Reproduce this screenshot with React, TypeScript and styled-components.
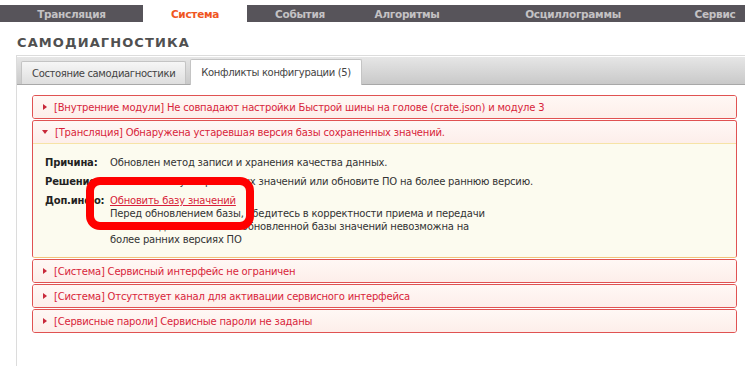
import React from "react";
import styled, { createGlobalStyle } from "styled-components";

const GlobalStyle = createGlobalStyle`
  html, body { margin: 0; padding: 0; background: #ffffff; }
  body { font-family: "DejaVu Sans", Verdana, sans-serif; font-size: 10px; color: #333; letter-spacing: -0.2px; }
`;

const Page = styled.div`
  width: 745px;
  height: 366px;
  overflow: hidden;
  padding-top: 5px;
  box-sizing: border-box;
`;

const NavBar = styled.div`
  display: flex;
  height: 17px;
  background: #57545a;
`;

const NavTab = styled.div<{ $w: number; $active?: boolean }>`
  flex: 0 0 ${(p) => p.$w}px;
  height: ${(p) => (p.$active ? 18 : 17)}px;
  display: flex;
  align-items: center;
  justify-content: center;
  font-size: 10.5px;
  font-weight: bold;
  letter-spacing: -0.3px;
  color: ${(p) => (p.$active ? "#f0561e" : "#c4c2c4")};
  background: ${(p) => (p.$active ? "#ffffff" : "transparent")};
`;

const Title = styled.h1`
  margin: 13px 0 0 17px;
  font-size: 13px;
  line-height: 16px;
  font-weight: bold;
  letter-spacing: 1.1px;
  color: #505050;
`;

const Content = styled.div`
  margin: 4px 0 0 16px;
  border-left: 1px solid #dcdcdc;
  border-top: 1px solid #dcdcdc;
  height: 320px;
`;

const TabStrip = styled.div`
  display: flex;
  align-items: flex-end;
  gap: 4px;
  height: 27px;
  margin-top: 1px;
  padding-left: 4px;
  background: linear-gradient(#e6e6e6, #c9c9c9);
  border-bottom: 1px solid #a8a8a8;
`;

const Tab = styled.div<{ $active?: boolean }>`
  height: ${(p) => (p.$active ? 26 : 23)}px;
  margin-bottom: ${(p) => (p.$active ? -1 : 0)}px;
  padding: 0 10px;
  display: flex;
  align-items: center;
  box-sizing: border-box;
  border: 1px solid #c4c4c4;
  border-bottom: none;
  border-radius: 2px 2px 0 0;
  font-size: 10px;
  letter-spacing: -0.35px;
  color: #444;
  background: ${(p) => (p.$active ? "#ffffff" : "linear-gradient(#f6f6f6, #dedede)")};
`;

const PanelList = styled.div`
  display: flex;
  flex-direction: column;
  gap: 1px;
  margin: 10px 0 0 15px;
  width: 705px;
`;

const Panel = styled.div<{ $open?: boolean }>`
  border: 1px solid #e05252;
  border-bottom-color: ${(p) => (p.$open ? "#f1c27a" : "#e05252")};
  border-radius: 3px;
  overflow: hidden;
`;

const PanelHeader = styled.div<{ $open?: boolean }>`
  height: 22px;
  display: flex;
  align-items: center;
  gap: 6px;
  padding-left: 9px;
  background: linear-gradient(#fff8f5, #fdeeea);
  border-bottom: ${(p) => (p.$open ? "1px solid #f6e3a6" : "none")};
  color: #d81f3a;
  font-size: 10px;
  white-space: nowrap;
`;

const Arrow = styled.span<{ $open?: boolean }>`
  width: 0;
  height: 0;
  ${(p) =>
    p.$open
      ? `border-left: 3px solid transparent; border-right: 3px solid transparent; border-top: 4px solid #c8283a; margin-right: 1px;`
      : `border-top: 3px solid transparent; border-bottom: 3px solid transparent; border-left: 4px solid #c8283a; margin-left: 1px; margin-right: 1px;`}
`;

const PanelBody = styled.div`
  position: relative;
  background: #fcfbef;
  padding: 12px 12px 11px;
  display: flex;
  flex-direction: column;
  gap: 6px;
`;

const Row = styled.div`
  display: grid;
  grid-template-columns: 65px 1fr;
  line-height: 13px;
  font-size: 10px;
  color: #333;
`;

const Label = styled.span`
  font-weight: bold;
  color: #222;
`;

const Link = styled.a`
  color: #d81f3a;
  text-decoration: underline;
  cursor: pointer;
`;

const DescLine = styled.div`
  white-space: nowrap;
`;

const Highlight = styled.div`
  position: absolute;
  left: 53px;
  top: 33px;
  width: 168px;
  height: 53px;
  box-sizing: border-box;
  border: 8px solid #ff0000;
  border-radius: 14px;
  pointer-events: none;
`;

const navTabs: { label: string; w: number; active?: boolean }[] = [
  { label: "Трансляция", w: 143 },
  { label: "Система", w: 104, active: true },
  { label: "События", w: 106 },
  { label: "Алгоритмы", w: 108 },
  { label: "Осциллограммы", w: 224 },
  { label: "Сервис", w: 60 },
];

const collapsedAfter = [
  "[Система] Сервисный интерфейс не ограничен",
  "[Система] Отсутствует канал для активации сервисного интерфейса",
  "[Сервисные пароли] Сервисные пароли не заданы",
];

const descLines = [
  "Перед обновлением базы, убедитесь в корректности приема и передачи",
  "качества данных. Работа обновленной базы значений невозможна на",
  "более ранних версиях ПО",
];

export default function App() {
  return (
    <Page>
      <GlobalStyle />
      <NavBar>
        {navTabs.map((t) => (
          <NavTab key={t.label} $w={t.w} $active={t.active}>
            {t.label}
          </NavTab>
        ))}
      </NavBar>
      <Title>САМОДИАГНОСТИКА</Title>
      <Content>
        <TabStrip>
          <Tab>Состояние самодиагностики</Tab>
          <Tab $active>Конфликты конфигурации (5)</Tab>
        </TabStrip>
        <PanelList>
          <Panel>
            <PanelHeader>
              <Arrow />
              [Внутренние модули] Не совпадают настройки Быстрой шины на голове (crate.json) и модуле 3
            </PanelHeader>
          </Panel>
          <Panel $open>
            <PanelHeader $open>
              <Arrow $open />
              [Трансляция] Обнаружена устаревшая версия базы сохраненных значений.
            </PanelHeader>
            <PanelBody>
              <Row>
                <Label>Причина:</Label>
                <span>Обновлен метод записи и хранения качества данных.</span>
              </Row>
              <Row>
                <Label>Решение:</Label>
                <span>Обновите базу сохраненных значений или обновите ПО на более раннюю версию.</span>
              </Row>
              <Row>
                <Label>Доп.инфо:</Label>
                <div>
                  <Link>Обновить базу значений</Link>
                  {descLines.map((l) => (
                    <DescLine key={l}>{l}</DescLine>
                  ))}
                </div>
              </Row>
              <Highlight />
            </PanelBody>
          </Panel>
          {collapsedAfter.map((t) => (
            <Panel key={t}>
              <PanelHeader>
                <Arrow />
                {t}
              </PanelHeader>
            </Panel>
          ))}
        </PanelList>
      </Content>
    </Page>
  );
}
